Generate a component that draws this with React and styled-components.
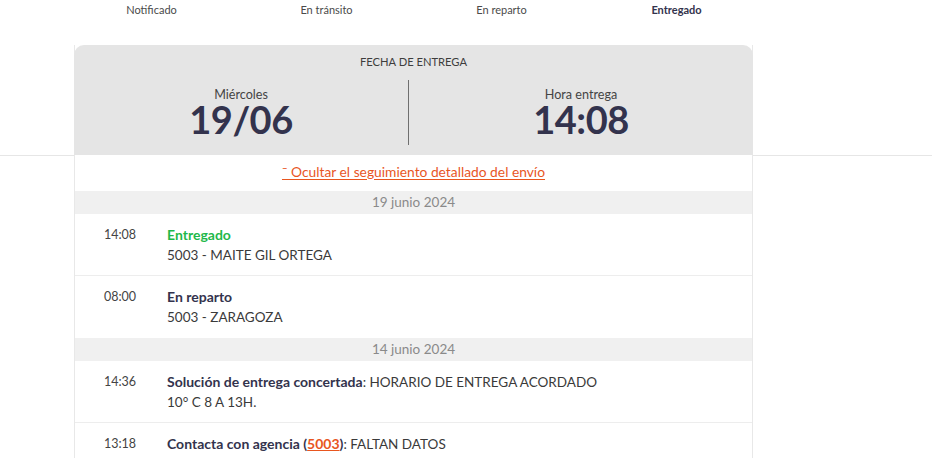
import React from "react";
import styled, { createGlobalStyle } from "styled-components";

const GlobalStyle = createGlobalStyle`
    body {
        margin: 0;
        background: #ffffff;
        font-family: Lato, "Noto Sans", sans-serif;
        color: #33334d;
    }
`;

const Page = styled.div`
    width: 932px;
    height: 458px;
    overflow: hidden;
    background: linear-gradient(
        to bottom,
        transparent 155px,
        #e6e6e6 155px,
        #e6e6e6 156px,
        transparent 156px
    );
`;

const Container = styled.div`
    width: 700px;
    margin-left: 64px;
`;

const Steps = styled.div`
    display: grid;
    grid-template-columns: repeat(4, 1fr);
    height: 45px;
`;

const Step = styled.div`
    text-align: center;
    font-size: 11px;
    line-height: 20px;
    color: ${(props) => (props.active ? "#33334d" : "#4a4a4a")};
    font-weight: ${(props) => (props.active ? 700 : 400)};
`;

const Card = styled.div`
    margin: 0 11px 0 10px;
    border-left: 1px solid #e8e8e8;
    border-right: 1px solid #e8e8e8;
    background: #ffffff;
`;

const Header = styled.div`
    background: #e5e5e5;
    border-radius: 10px 10px 0 0;
    height: 110px;
    margin: 0 -1px;
    box-sizing: border-box;
    padding-top: 10px;
`;

const HeaderTitle = styled.div`
    text-align: center;
    font-size: 11.2px;
    color: #3d3d3d;
    line-height: 14px;
`;

const HeaderCols = styled.div`
    display: grid;
    grid-template-columns: 334px 1px 1fr;
    margin-top: 11px;
    height: 65px;
`;

const Divider = styled.div`
    background: #6f6f6f;
`;

const HeaderCol = styled.div`
    display: flex;
    flex-direction: column;
    align-items: center;
    padding-top: 8px;
`;

const Label = styled.div`
    font-size: 12.6px;
    line-height: 14px;
    color: #444444;
`;

const BigValue = styled.div`
    font-size: 38px;
    font-weight: 700;
    line-height: 34px;
    color: #33334d;
    letter-spacing: -0.5px;
`;

const ToggleRow = styled.div`
    height: 36px;
    display: flex;
    align-items: center;
    justify-content: center;
    padding-bottom: 4px;
    box-sizing: border-box;
`;

const ToggleLink = styled.a`
    font-size: 13.8px;
    color: #e8561f;
    text-decoration: underline;
    text-underline-offset: 2px;
    cursor: pointer;
`;

const DayRow = styled.div`
    height: 23px;
    line-height: 23px;
    background: #f0f0f0;
    text-align: center;
    font-size: 13.5px;
    color: #8a8a8a;
`;

const Event = styled.div`
    display: grid;
    grid-template-columns: 63px 1fr;
    padding: 11px 0 ${(props) => (props.last ? 11 : 10)}px 29px;
    line-height: 20px;
    border-bottom: ${(props) => (props.last ? "none" : "1px solid #ededed")};
    font-size: 13.5px;
`;

const Time = styled.div`
    color: #444444;
    font-size: 12.5px;
`;

const Title = styled.span`
    font-weight: 700;
    font-size: 14px;
    color: ${(props) => (props.green ? "#1fb84a" : "#33334d")};
`;

const Detail = styled.span`
    color: #3a3a3a;
    text-transform: uppercase;
`;

const AgencyLink = styled.span`
    color: #e8561f;
    text-decoration: underline;
    font-weight: 700;
`;

const steps = [
    { label: "Notificado" },
    { label: "En tránsito" },
    { label: "En reparto" },
    { label: "Entregado", active: true },
];

const App = () => {
    return (
        <Page>
            <GlobalStyle />
            <Container>
                <Steps>
                    {steps.map((s) => (
                        <Step key={s.label} active={s.active}>
                            {s.label}
                        </Step>
                    ))}
                </Steps>
                <Card>
                    <Header>
                        <HeaderTitle>FECHA DE ENTREGA</HeaderTitle>
                        <HeaderCols>
                            <HeaderCol>
                                <Label>Miércoles</Label>
                                <BigValue>19/06</BigValue>
                            </HeaderCol>
                            <Divider />
                            <HeaderCol>
                                <Label>Hora entrega</Label>
                                <BigValue>14:08</BigValue>
                            </HeaderCol>
                        </HeaderCols>
                    </Header>
                    <ToggleRow>
                        <ToggleLink>¯ Ocultar el seguimiento detallado del envío</ToggleLink>
                    </ToggleRow>
                    <DayRow>19 junio 2024</DayRow>
                    <Event>
                        <Time>14:08</Time>
                        <div>
                            <Title green>Entregado</Title>
                            <br />
                            <Detail>5003 - Maite Gil Ortega</Detail>
                        </div>
                    </Event>
                    <Event last>
                        <Time>08:00</Time>
                        <div>
                            <Title>En reparto</Title>
                            <br />
                            <Detail>5003 - Zaragoza</Detail>
                        </div>
                    </Event>
                    <DayRow>14 junio 2024</DayRow>
                    <Event>
                        <Time>14:36</Time>
                        <div>
                            <Title>Solución de entrega concertada</Title>
                            <Detail>: Horario de entrega acordado</Detail>
                            <br />
                            <Detail>10° C 8 A 13H.</Detail>
                        </div>
                    </Event>
                    <Event>
                        <Time>13:18</Time>
                        <div>
                            <Title>
                                Contacta con agencia (<AgencyLink>5003</AgencyLink>)
                            </Title>
                            <Detail>: Faltan datos</Detail>
                        </div>
                    </Event>
                </Card>
            </Container>
        </Page>
    );
};

export default App;
